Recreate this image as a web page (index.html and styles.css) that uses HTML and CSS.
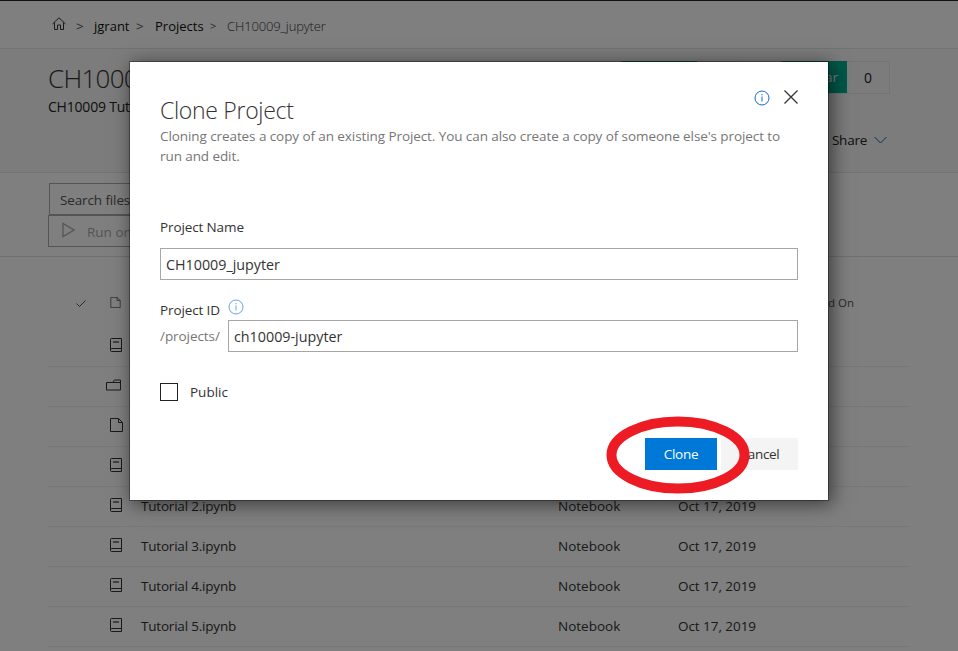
FILE: index.html
```html
<!DOCTYPE html>
<html lang="en">
<head>
<meta charset="utf-8">
<title>Clone Project</title>
<link rel="stylesheet" href="styles.css">
</head>
<body>
<svg class="defs" aria-hidden="true">
  <symbol id="book" viewBox="0 0 12 14"><path d="M11.500.5H1.500Q.5.5.5 1.500v11q0 1 1 1h10zM.5 12.500q0-1.500 1-2h10"/><path d="M3 3.500h6M3 4.500h6" stroke-opacity=".6"/></symbol>
  <symbol id="file" viewBox="0 0 13 14"><path d="M.5.5h8l4 4v9H.5zM8.500.5v4h4"/></symbol>
  <symbol id="folder" viewBox="0 0 15 12"><path d="M.5 3.500h6l2-2.500h6v10H.5zM6.500 3.500h8"/></symbol>
  <symbol id="info" viewBox="0 0 16 16"><circle cx="8" cy="8" r="7"/><path d="M8 6.500v5M8 4v1.300"/></symbol>
</svg>
<div class="page">
  <nav class="crumbs">
    <svg class="home" viewBox="0 0 14 13"><path d="M.5 7 7 .8 13.500 7M2.500 5.500v7h3V8h3v4.500h3v-7"/></svg>
    <span class="sep s1">&gt;</span><span class="c1">jgrant</span><span class="sep s2">&gt;</span><span class="c2">Projects</span><span class="sep s3">&gt;</span><span class="c3">CH10009_jupyter</span>
  </nav>
  <header class="hero">
    <div class="titles">
      <h1>CH10009</h1>
      <p>CH10009 Tutorials</p>
    </div>
    <div class="actions">
      <div class="counts">
        <div class="count"><span class="green"></span><span class="num"></span></div>
        <div class="count star"><span class="green">Star</span><span class="num">0</span></div>
      </div>
      <div class="share"><span>Share</span><svg viewBox="0 0 13 8"><path d="M.5 1 6.500 7l6-6"/></svg></div>
    </div>
  </header>
  <div class="toolbar">
    <div class="search">Search files</div>
    <div class="run"><svg viewBox="0 0 13 16"><path d="M1 1.500v13L12 8z"/></svg><span>Run on</span></div>
  </div>
  <main class="files">
    <div class="row head"><svg class="check" viewBox="0 0 10 7"><path d="M.5 3.500 3.500 6.500 9.500.5"/></svg><svg class="icon small"><use href="#file"/></svg><span class="created">Created On</span></div>
    <div class="row"><svg class="icon"><use href="#book"/></svg></div>
    <div class="row"><svg class="icon folder"><use href="#folder"/></svg></div>
    <div class="row"><svg class="icon doc"><use href="#file"/></svg></div>
    <div class="row"><svg class="icon"><use href="#book"/></svg></div>
    <div class="row"><svg class="icon"><use href="#book"/></svg><span class="name">Tutorial 2.ipynb</span><span class="type">Notebook</span><span class="date">Oct 17, 2019</span></div>
    <div class="row"><svg class="icon"><use href="#book"/></svg><span class="name">Tutorial 3.ipynb</span><span class="type">Notebook</span><span class="date">Oct 17, 2019</span></div>
    <div class="row"><svg class="icon"><use href="#book"/></svg><span class="name">Tutorial 4.ipynb</span><span class="type">Notebook</span><span class="date">Oct 17, 2019</span></div>
    <div class="row"><svg class="icon"><use href="#book"/></svg><span class="name">Tutorial 5.ipynb</span><span class="type">Notebook</span><span class="date">Oct 17, 2019</span></div>
  </main>
</div>
<div class="overlay">
  <section class="modal" role="dialog">
    <div class="modal-head">
      <h2>Clone Project</h2>
      <div class="tools"><svg class="info"><use href="#info"/></svg><svg class="close" viewBox="0 0 14 14"><path d="m.5.5 13 13m0-13-13 13"/></svg></div>
    </div>
    <p class="desc">Cloning creates a copy of an existing Project. You can also create a copy of someone else's project to<br>run and edit.</p>
    <div class="label">Project Name</div>
    <div class="field">CH10009_jupyter</div>
    <div class="label id"><span>Project ID</span><svg class="info pale"><use href="#info"/></svg></div>
    <div class="idrow"><span class="prefix">/projects/</span><div class="field">ch10009-jupyter</div></div>
    <div class="public"><span class="box"></span><span>Public</span></div>
    <div class="buttons"><div class="btn primary">Clone</div><div class="btn">Cancel</div></div>
  </section>
  <svg class="ring" viewBox="0 0 144 78"><ellipse cx="72" cy="39" rx="66.500" ry="33.500"/></svg>
</div>
</body>
</html>
```
FILE: styles.css
```css
* { box-sizing: border-box; }
body { margin: 0; width: 958px; height: 651px; overflow: hidden; position: relative; background: #fff; font-family: "Open Sans", "Noto Sans", sans-serif; font-size: 13.5px; color: #333; white-space: nowrap; }
svg { fill: none; stroke: #333; flex: none; }
h1, h2, p { margin: 0; font-weight: 300; }
.defs { position: absolute; width: 0; height: 0; }
.page { height: 651px; overflow: hidden; border-top: 1px solid #222; }
.crumbs { height: 48px; padding: 2px 0 0 52px; display: flex; align-items: center; border-bottom: 1px solid #e6e6e6; line-height: 20px; font-size: 13px; color: #111; }
.home { width: 14px; height: 13px; margin-top: -4px; }
.sep { color: #555; font-size: 13.5px; }
.s1 { width: 18px; margin-left: 10px; }
.c1 { width: 42px; }
.s2 { width: 19px; }
.c2 { width: 55px; }
.s3 { width: 17px; font-size: 11px; }
.c3 { color: #333; font-weight: 300; letter-spacing: -.13px; }
.hero { height: 124px; padding: 12px 68px 0 48px; background: #f8f8f8; border-bottom: 1px solid #e6e6e6; display: flex; justify-content: space-between; }
.titles h1 { font-size: 26px; line-height: 34px; letter-spacing: -.7px; }
.titles p { font-size: 14px; line-height: 20px; margin-top: 2px; font-weight: 400; color: #222; letter-spacing: -.2px; }
.counts { display: flex; gap: 41px; }
.count { height: 33px; display: flex; line-height: 32px; border: 1px solid #e8e8e8; border-left: 0; border-top: 0; }
.green { width: 76px; background: #00b294; color: #fff; }
.num { width: 42px; background: #f9f9f9; border-top: 1px solid #e8e8e8; font-size: 14px; text-align: center; color: #222; }
.star .green { width: 66px; padding-right: 9px; text-align: right; }
.share { margin: 36px 3px 0 0; display: flex; justify-content: flex-end; align-items: center; gap: 7px; line-height: 20px; color: #222; letter-spacing: -.25px; }
.share svg { width: 13px; height: 8px; stroke: #1262b5; }
.toolbar { height: 84px; padding: 10px 0 0 48px; border-bottom: 1px solid #e1e1e1; }
.search { width: 200px; height: 32px; margin-left: 1px; padding-left: 10px; line-height: 33px; border: 1px solid #aaa; color: #555; letter-spacing: -.12px; }
.run { width: 201px; height: 32px; border: 1px solid #aaa; display: flex; align-items: center; padding-left: 13px; color: #aaa; gap: 12px; }
.run svg { width: 13px; height: 16px; stroke: #aaa; stroke-width: 1.3; margin-top: -3px; }
.run span { padding-top: 1px; }
.files { width: 862px; margin-left: 48px; padding-top: 27px; }
.row { height: 40px; padding-bottom: 1px; display: grid; grid-template-columns: 93px 417px 120px 1fr; align-items: center; border-bottom: 1px solid #f0f0f0; line-height: 20px; }
.row span { grid-row: 1; }
.name { grid-column: 2; letter-spacing: -.2px; }
.type { grid-column: 3; }
.date { grid-column: 4; letter-spacing: -.05px; }
.icon { width: 12px; height: 14px; margin: -3px 0 0 62px; grid-column: 1; grid-row: 1; }
.icon.folder { width: 15px; height: 12px; margin: -3px 0 0 58px; }
.icon.doc { width: 13px; }
.head { height: 43px; padding-bottom: 5px; border: 0; }
.check { width: 10px; height: 7px; margin-left: 28px; grid-column: 1; grid-row: 1; stroke: #555; }
.icon.small { width: 11px; height: 11px; margin-top: -2px; stroke: #555; }
.created { grid-column: 4; justify-self: end; font-size: 11.5px; margin-right: 56px; color: #555; }
.overlay { position: absolute; inset: 0; background: rgba(0,0,0,.5); }
.modal { position: absolute; left: 130px; top: 62px; width: 698px; height: 438px; background: #fff; padding: 31px 30px 0; box-shadow: 0 0 0 1px rgba(0,0,0,.35), 3px 3px 18px 1px rgba(0,0,0,.55); }
.modal-head { display: flex; justify-content: space-between; height: 33px; }
.modal-head h2 { font-size: 23px; line-height: 34px; letter-spacing: -.3px; color: #333; }
.tools { display: flex; gap: 14px; height: 16px; align-items: center; margin-top: -4px; }
.info { width: 16px; height: 16px; stroke: #0f69d6; }
.tools .info { margin-top: 1px; }
.close { width: 14px; height: 14px; stroke-width: 1.3; }
.desc { color: #767676; font-weight: 400; line-height: 20px; letter-spacing: -.085px; }
.label { margin-top: 51px; line-height: 20px; height: 31px; color: #333; letter-spacing: -.12px; }
.field { height: 32px; border: 1px solid #a6a6a6; padding-left: 5px; line-height: 32px; font-size: 14.3px; color: #333; }
.label.id { margin-top: 20px; height: 20px; display: flex; gap: 8px; }
.pale { stroke: #68a4e5; margin-top: -1px; }
.idrow { display: flex; }
.prefix { width: 68px; line-height: 32px; color: #767676; letter-spacing: -.07px; }
.idrow .field { flex: 1; }
.public { margin-top: 31px; height: 18px; display: flex; align-items: center; gap: 12px; }
.box { width: 18px; height: 18px; border: 1px solid #222; }
.buttons { margin-top: 37px; display: flex; justify-content: flex-end; gap: 4px; }
.btn { height: 32px; width: 77px; background: #f4f4f4; text-align: center; line-height: 32px; letter-spacing: -.3px; }
.primary { width: 72px; background: #0078d7; color: #fff; }
.ring { position: absolute; left: 605.500px; top: 415.500px; width: 144px; height: 78px; stroke: #ed1c24; stroke-width: 10; }
```
